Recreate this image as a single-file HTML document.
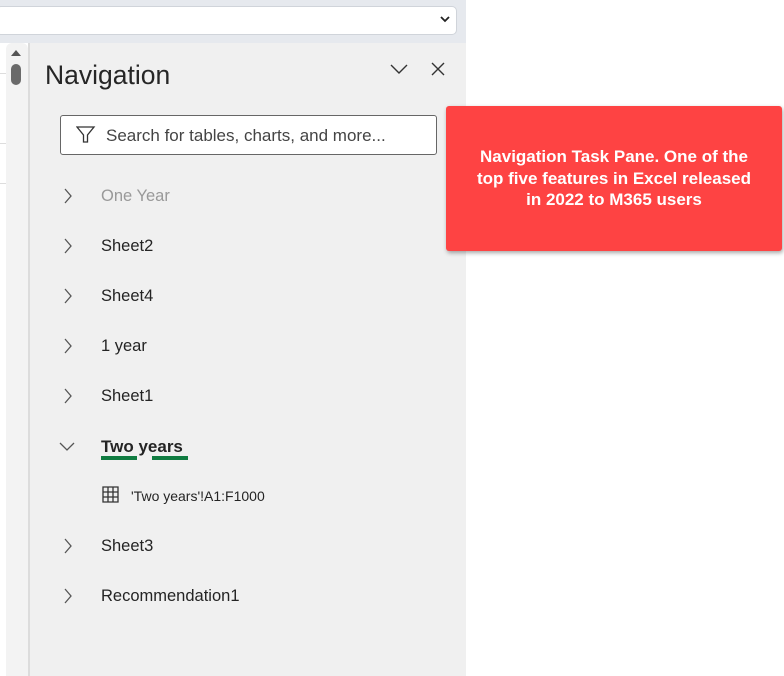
<!DOCTYPE html>
<html><head><style>
body{margin:0;width:784px;height:676px;position:relative;background:#fff;font-family:"Liberation Sans",sans-serif;overflow:hidden}
.top{position:absolute;left:0;top:0;width:466px;height:43px;background:#e6e9ee}
.dd{position:absolute;left:-4px;top:6px;width:459px;height:27px;background:#fff;border:1px solid #d0d4da;border-radius:5px}
.left{position:absolute;left:0;top:43px;width:6px;height:633px;background:#fff}
.sb{position:absolute;left:6px;top:43px;width:22px;height:633px;background:#f3f3f3;border-radius:6px 6px 0 0}
.div{position:absolute;left:28px;top:43px;width:2px;height:633px;background:#dcdcdc}
.pane{position:absolute;left:30px;top:43px;width:436px;height:633px;background:#f0f0f0}
.t{position:absolute;color:#242424;font-size:16.5px;white-space:nowrap}
.chev{position:absolute;left:62px}
.call{position:absolute;left:446px;top:106px;width:336px;height:145px;background:#fe4343;border-radius:3px;box-shadow:1px 2px 4px rgba(0,0,0,.35);color:#fff;font-weight:bold;font-size:17px;text-align:center;line-height:21.5px;box-sizing:border-box;padding:40px 2px 0;white-space:nowrap}
</style></head><body>
<div class="top"><div class="dd"></div>
<svg style="position:absolute;left:439px;top:15px" width="12" height="8"><path d="M2 2l4 4 4-4" stroke="#222" stroke-width="1.8" fill="none"/></svg></div>
<div class="left">
<div style="position:absolute;top:30px;left:0;width:6px;border-top:1px solid #ddd"></div>
<div style="position:absolute;top:100px;left:0;width:6px;border-top:1px solid #ddd"></div>
<div style="position:absolute;top:140px;left:0;width:6px;border-top:1px solid #ddd"></div>
</div>
<div class="sb">
<svg style="position:absolute;left:4px;top:6px" width="12" height="8"><path d="M1 7L6 1 11 7Z" fill="#555"/></svg>
<div style="position:absolute;left:5px;top:21px;width:10px;height:21px;border-radius:5px;background:#6a6a6a"></div></div>
<div class="div"></div>
<div class="pane"></div>
<div class="t" style="left:45px;top:60px;font-size:26.5px;color:#262626">Navigation</div>
<svg style="position:absolute;left:390px;top:63px" width="18" height="12"><path d="M1 2l8 8 8-8" stroke="#333" stroke-width="1.4" fill="none"/></svg>
<svg style="position:absolute;left:431px;top:62px" width="14" height="14"><path d="M1 1l12 12M13 1L1 13" stroke="#333" stroke-width="1.4"/></svg>
<div style="position:absolute;left:60px;top:115px;width:375px;height:38px;border:1px solid #666;border-radius:3px;background:#fff"></div>
<svg style="position:absolute;left:76px;top:125px" width="20" height="20"><path d="M1 2h17l-6.5 8v7h-4v-7z" stroke="#333" stroke-width="1.3" fill="none"/></svg>
<div class="t" style="left:106px;top:126px;font-size:17px;color:#444">Search for tables, charts, and more...</div>
<svg class="chev" style="top:188px" width="12" height="16"><path d="M3 1l6 7-6 7" stroke="#555" stroke-width="1.3" fill="none"/></svg>
<div class="t" style="left:101px;top:187px;color:#999">One Year</div>
<svg class="chev" style="top:238px" width="12" height="16"><path d="M3 1l6 7-6 7" stroke="#555" stroke-width="1.3" fill="none"/></svg>
<div class="t" style="left:101px;top:237px">Sheet2</div>
<svg class="chev" style="top:288px" width="12" height="16"><path d="M3 1l6 7-6 7" stroke="#555" stroke-width="1.3" fill="none"/></svg>
<div class="t" style="left:101px;top:287px">Sheet4</div>
<svg class="chev" style="top:338px" width="12" height="16"><path d="M3 1l6 7-6 7" stroke="#555" stroke-width="1.3" fill="none"/></svg>
<div class="t" style="left:101px;top:337px">1 year</div>
<svg class="chev" style="top:388px" width="12" height="16"><path d="M3 1l6 7-6 7" stroke="#555" stroke-width="1.3" fill="none"/></svg>
<div class="t" style="left:101px;top:387px">Sheet1</div>
<svg style="position:absolute;left:59px;top:441px" width="18" height="12"><path d="M1 2l7 7 7-7" stroke="#555" stroke-width="1.3" fill="none"/></svg>
<div class="t" style="left:101px;top:437px;font-weight:bold;font-size:17px">Two years</div>
<div style="position:absolute;left:101px;top:456px;width:36px;height:4px;background:#107c41"></div>
<div style="position:absolute;left:152px;top:456px;width:36px;height:4px;background:#107c41"></div>
<svg style="position:absolute;left:102px;top:486px" width="17" height="17"><path d="M1 1h15v15H1zM1 6h15M1 11h15M6 1v15M11 1v15" stroke="#333" stroke-width="1.3" fill="none"/></svg>
<div class="t" style="left:131px;top:488px;font-size:14px">'Two years'!A1:F1000</div>
<svg class="chev" style="top:538px" width="12" height="16"><path d="M3 1l6 7-6 7" stroke="#555" stroke-width="1.3" fill="none"/></svg>
<div class="t" style="left:101px;top:537px">Sheet3</div>
<svg class="chev" style="top:588px" width="12" height="16"><path d="M3 1l6 7-6 7" stroke="#555" stroke-width="1.3" fill="none"/></svg>
<div class="t" style="left:101px;top:587px">Recommendation1</div>
<div class="call">Navigation Task Pane. One of the<br>top five features in Excel released<br>in 2022 to M365 users</div>
</body></html>
